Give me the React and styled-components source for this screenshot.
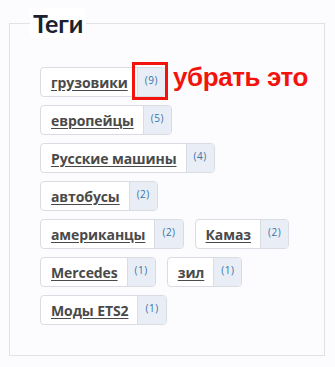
import React from "react";
import styled, { createGlobalStyle } from "styled-components";

const Global = createGlobalStyle`
  html, body { margin: 0; padding: 0; background: #fcfcfe; }
  body { font-family: "Open Sans", "Liberation Sans", sans-serif; }
`;

const Page = styled.div`
  position: relative;
  width: 335px;
  height: 367px;
  padding: 8px 9px 0 9px;
  box-sizing: border-box;
`;

const Box = styled.fieldset`
  margin: 0;
  width: 316px;
  box-sizing: border-box;
  border: 1px solid #e2e2e6;
  padding: 29px 20px 30px 20px;
`;

const Legend = styled.legend`
  padding: 0 3px;
  background: #fff;
  font-family: Lato, "Open Sans", sans-serif;
  font-weight: 700;
  font-size: 25px;
  line-height: 30px;
  color: #1b2130;
`;

const Rows = styled.div`
  display: flex;
  flex-direction: column;
  gap: 8px;
  padding-left: 10px;
`;

const Row = styled.div`
  display: flex;
  gap: 11px;
`;

const Tag = styled.div`
  position: relative;
  display: flex;
  height: 30px;
  box-sizing: border-box;
  border: 1px solid #d9dde3;
  border-radius: 4px;
  background: #fff;
`;

const Label = styled.a`
  display: flex;
  align-items: center;
  padding: 0 9px 0 10px;
  font-size: 14px;
  font-weight: 700;
  color: #4a4a4a;
  text-decoration: underline;
  text-underline-offset: 2px;
  letter-spacing: -0.1px;
`;

const Count = styled.span`
  display: flex;
  align-items: flex-start;
  padding: 5px 7px 0 7px;
  background: #e9eef6;
  border-left: 1px solid #d9dde3;
  border-radius: 0 3px 3px 0;
  font-size: 10px;
  color: #3672a8;
  letter-spacing: 0.5px;
`;

const Highlight = styled.div`
  position: absolute;
  right: -3px;
  top: -6px;
  width: 36px;
  height: 38px;
  box-sizing: border-box;
  border: 3px solid #f2140c;
  pointer-events: none;
`;

const Note = styled.div`
  position: absolute;
  left: 173px;
  top: 59px;
  font-family: "Liberation Sans", Arial, sans-serif;
  font-weight: 700;
  font-size: 26px;
  line-height: 36px;
  color: #f2140c;
  letter-spacing: -0.4px;
`;

const rows = [
  [["грузовики", 9]],
  [["европейцы", 5]],
  [["Русские машины", 4]],
  [["автобусы", 2]],
  [["американцы", 2], ["Камаз", 2]],
  [["Mercedes", 1], ["зил", 1]],
  [["Моды ETS2", 1]],
];

export default function App() {
  return (
    <Page>
      <Global />
      <Box>
        <Legend>Теги</Legend>
        <Rows>
          {rows.map((row, r) => (
            <Row key={r}>
              {row.map(([name, n]) => (
                <Tag key={name}>
                  <Label>{name}</Label>
                  <Count>({n})</Count>
                  {r === 0 && <Highlight />}
                </Tag>
              ))}
            </Row>
          ))}
        </Rows>
      </Box>
      <Note>убрать это</Note>
    </Page>
  );
}
